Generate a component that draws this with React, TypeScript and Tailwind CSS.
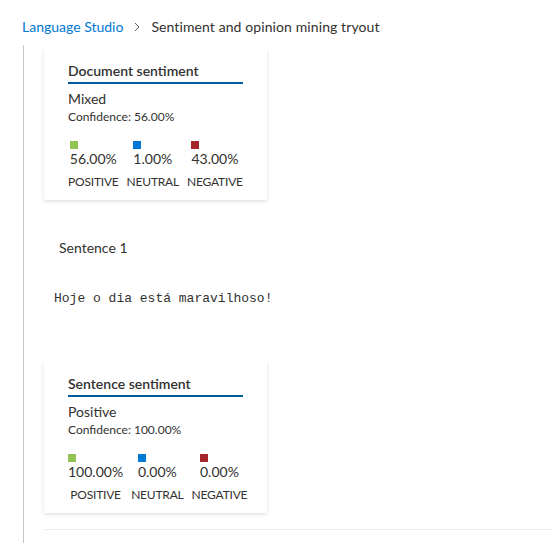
import React from "react";

interface Score {
  value: string;
  label: string;
  color: string;
}

interface SentimentCardProps {
  title: string;
  sentiment: string;
  confidence: string;
  scores: Score[];
}

const SentimentCard = ({ title, sentiment, confidence, scores }: SentimentCardProps) => {
  return (
    <div className="w-[223px] bg-white px-6 pt-[13px] pb-[10px] shadow-[0_1.6px_3.6px_rgba(0,0,0,0.13),0_0.3px_0.9px_rgba(0,0,0,0.11)]">
      <div className="border-b-2 border-[#005a9e] pb-[1px] text-[14px] leading-[20px] font-semibold text-[#323130]">
        {title}
      </div>
      <div className="mt-[5px] text-[14px] leading-[20px] text-[#323130]">{sentiment}</div>
      <div className="text-[12px] leading-[16px] text-[#323130]">Confidence: {confidence}</div>
      <div className="mt-[16px] flex gap-2">
        {scores.map((s) => (
          <div key={s.label} className="flex flex-col items-center">
            <div>
              <div className={`h-2 w-2 ${s.color}`} />
              <div className="text-[14px] leading-[20px] text-[#323130]">{s.value}</div>
            </div>
            <div className="mt-[5px] text-[12px] leading-[16px] tracking-[-0.2px] text-[#323130]">{s.label}</div>
          </div>
        ))}
      </div>
    </div>
  );
};

const App = () => {
  return (
    <div className="min-h-[543px] bg-white font-['Lato','Open_Sans',sans-serif] text-[#323130]">
      <div className="flex items-center pl-[22px] pt-[17px] text-[14px] leading-[20px]">
        <span className="text-[#0078d4]">Language Studio</span>
        <svg className="ml-[10px] mr-[10px]" width="8" height="10" viewBox="0 0 8 10" fill="none">
          <path d="M2 1l4 4-4 4" stroke="#605e5c" strokeWidth="1" />
        </svg>
        <span className="tracking-[0.1px]">Sentiment and opinion mining tryout</span>
      </div>
      <div className="ml-[23px] mt-[8px] border-l border-[#c8c6c4] pl-5 pt-[3px] pb-[14px]">
        <SentimentCard
          title="Document sentiment"
          sentiment="Mixed"
          confidence="56.00%"
          scores={[
            { value: "56.00%", label: "POSITIVE", color: "bg-[#92c353]" },
            { value: "1.00%", label: "NEUTRAL", color: "bg-[#0078d4]" },
            { value: "43.00%", label: "NEGATIVE", color: "bg-[#a4262c]" },
          ]}
        />
        <div className="mt-[38px] pl-[15px] text-[14px] leading-[20px]">Sentence 1</div>
        <div className="mt-[32px] pl-[10px] font-['Liberation_Mono',monospace] text-[13px] leading-[18px] text-[#323130]">
          Hoje o dia está maravilhoso!
        </div>
        <div className="mt-[53px]">
          <SentimentCard
            title="Sentence sentiment"
            sentiment="Positive"
            confidence="100.00%"
            scores={[
              { value: "100.00%", label: "POSITIVE", color: "bg-[#92c353]" },
              { value: "0.00%", label: "NEUTRAL", color: "bg-[#0078d4]" },
              { value: "0.00%", label: "NEGATIVE", color: "bg-[#a4262c]" },
            ]}
          />
        </div>
        <div className="mt-[16px] h-px bg-[#edebe9]" />
      </div>
    </div>
  );
};

export default App;
